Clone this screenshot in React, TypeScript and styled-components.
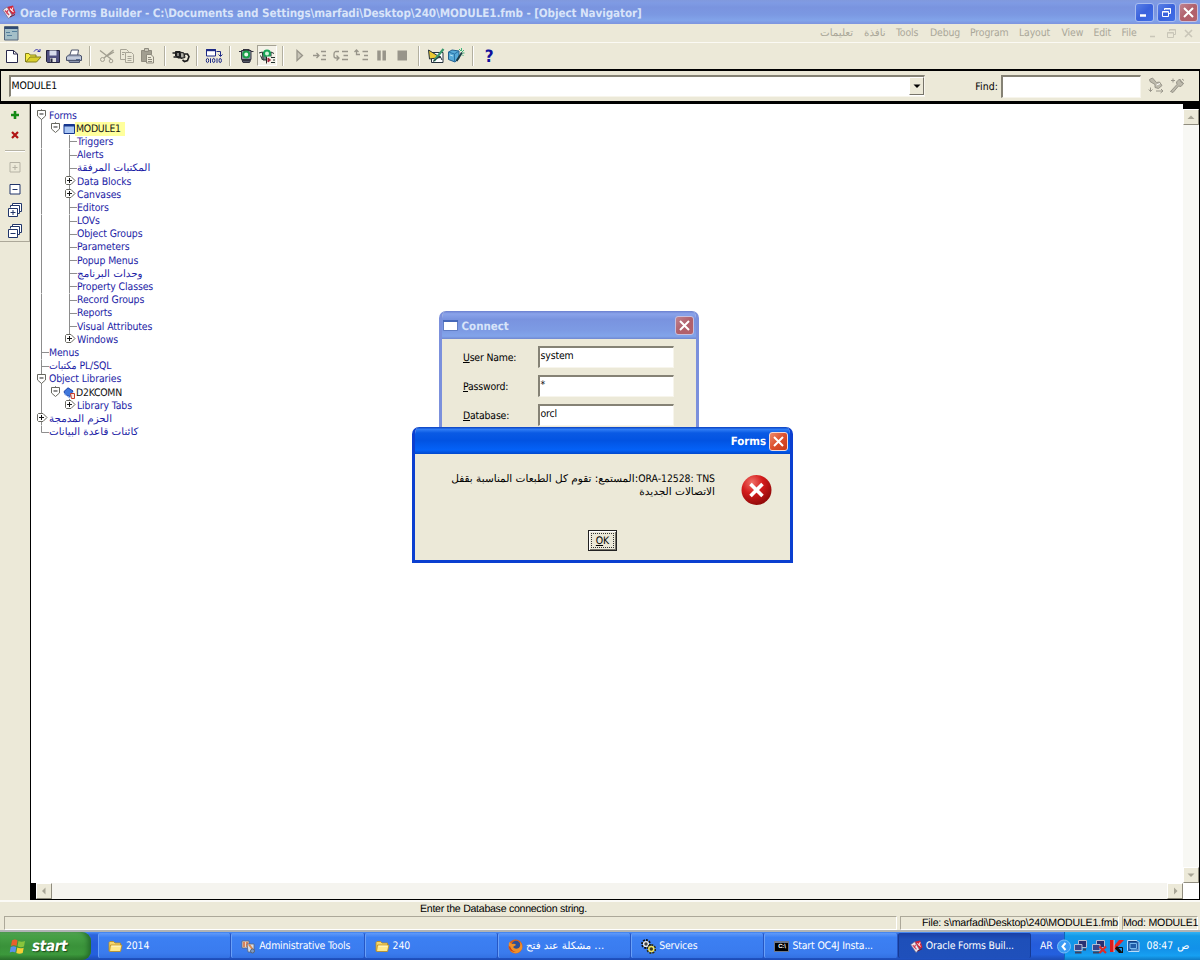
import { ReactNode } from 'react';
import styled, { createGlobalStyle, css } from 'styled-components';

const UI_FONT = `'DejaVu Sans Condensed', 'DejaVu Sans', sans-serif`;
const FACE = '#ece9d8';

const GlobalStyle = createGlobalStyle`
  * {
    box-sizing: border-box;
  }
  body {
    margin: 0;
    overflow: hidden;
    background: ${FACE};
    font-family: ${UI_FONT};
    font-stretch: condensed;
    font-size: 10.4px;
    letter-spacing: -0.12px;
    color: #000;
    text-rendering: geometricPrecision;
  }
  svg {
    display: block;
    flex: none;
  }
`;

const Screen = styled.div`
  position: relative;
  width: 1200px;
  height: 960px;
  display: flex;
  flex-direction: column;
  overflow: hidden;
`;

/* joined script must not be letter-spaced */
const arabicText = css`
  font-family: 'DejaVu Sans', sans-serif;
  font-stretch: normal;
  font-size: 10.3px;
  letter-spacing: 0;
`;

const Label = styled.span<{ $ls?: number; $w?: number; $arabic?: boolean }>`
  white-space: pre;
  letter-spacing: ${({ $ls = -0.15 }) => $ls}px;
  ${({ $w }) => $w && `width: ${$w}px; flex: none;`}
  ${({ $arabic }) => $arabic && arabicText}
`;

/* ---------- main title bar ---------- */

const TitleBar = styled.div`
  height: 24px;
  flex: none;
  display: flex;
  align-items: center;
  padding: 0 2px 0 2px;
  background: linear-gradient(#8199dd 0%, #7f9be4 12%, #7a94df 30%, #7b98e2 60%, #82a4ea 85%, #7d94de 100%);
`;

const TitleText = styled.div`
  flex: 1;
  margin-left: 4px;
  padding-top: 2px;
  font-size: 11.6px;
  font-weight: 700;
  letter-spacing: -0.095px;
  color: #d8e4f9;
  white-space: pre;
`;

const CaptionButton = styled.div<{ $tone: 'blue' | 'dim' | 'red' }>`
  width: 19px;
  height: 19px;
  margin-left: 3px;
  display: flex;
  align-items: center;
  justify-content: center;
  flex: none;
  border: 1px solid #dfe6f8;
  border-radius: 3px;
  ${({ $tone }) =>
    $tone === 'blue' &&
    css`
      border-color: #a9bdf0;
      background: linear-gradient(135deg, #5a80e6, #3a62dc 50%, #3f6fe8);
    `}
  ${({ $tone }) =>
    $tone === 'dim' &&
    css`
      border-color: #c9bfdc;
      background: linear-gradient(135deg, #c0838f, #b0606c 50%, #b5616a);
    `}
  ${({ $tone }) =>
    $tone === 'red' &&
    css`
      border-color: #f4d8d4;
      background: linear-gradient(135deg, #ec8a6c, #dc4f2c 50%, #c63a18);
    `}
`;

/* ---------- menu bar ---------- */

const MenuBar = styled.div`
  height: 19px;
  flex: none;
  display: flex;
  align-items: center;
  padding: 0 7px 0 3px;
  border-bottom: 1px solid #fbfaf4;
  color: #aaa798;
`;

const MenuSpacer = styled.div`
  flex: 1;
`;

const MenuItem = styled.div<{ $w: number; $arabic?: boolean }>`
  width: ${({ $w }) => $w}px;
  flex: none;
  white-space: pre;
  ${({ $arabic }) => $arabic && arabicText}
`;

const ChildButtons = styled.div`
  display: flex;
  align-items: center;
  gap: 7.5px;
`;

/* ---------- toolbar ---------- */

const Toolbar = styled.div`
  height: 27px;
  flex: none;
  display: flex;
  align-items: center;
  padding: 0 0 1px 1.7px;
  border-bottom: 1px solid #000;
`;

const ToolSlot = styled.div<{ $pressed?: boolean }>`
  width: 20.7px;
  height: 21px;
  display: flex;
  align-items: center;
  justify-content: center;
  ${({ $pressed }) =>
    $pressed &&
    css`
      border: 1px solid;
      border-color: #a5a294 #fff #fff #a5a294;
      background: #f4f2e8;
    `}
`;

const ToolDivider = styled.div`
  width: 12px;
  height: 20px;
  display: flex;
  justify-content: center;
  &::before {
    content: '';
    width: 2px;
    background: linear-gradient(90deg, #b3b0a0 50%, #fff 50%);
  }
`;

/* ---------- module / find strip ---------- */

const FindStrip = styled.div`
  height: 34px;
  flex: none;
  display: flex;
  align-items: flex-start;
  padding: 4px 12px 0 8px;
  border: 1px solid #000;
  border-width: 1px 1px 3px 1px;
`;

const SunkenField = styled.div<{ $w: number; $h: number }>`
  width: ${({ $w }) => $w}px;
  height: ${({ $h }) => $h}px;
  flex: none;
  display: flex;
  background: #fff;
  border-style: solid;
  border-width: 2px 1px 1px 2px;
  border-color: #858275 #f7f5ec #f7f5ec #858275;
  white-space: pre;
`;

const ModuleText = styled.div`
  flex: 1;
  padding: 3px 0 0 0.5px;
`;

const DropButton = styled.div`
  width: 15px;
  height: 18px;
  display: flex;
  align-items: center;
  justify-content: center;
  background: ${FACE};
  border: 1px solid;
  border-color: #fff #77746a #77746a #fff;
`;

const FindLabel = styled.div`
  width: 76px;
  padding: 6px 3px 0 0;
  text-align: right;
  letter-spacing: 0.1px;
`;

const FindIcons = styled.div`
  display: flex;
  gap: 5px;
  padding: 2px 0 0 7px;
`;

/* ---------- work area ---------- */

const WorkArea = styled.div`
  height: 796px;
  flex: none;
  display: flex;
`;

const SideColumn = styled.div`
  width: 30px;
  flex: none;
`;

const SideTools = styled.div`
  height: 138px;
  display: flex;
  flex-direction: column;
  align-items: center;
  border-right: 1px solid #aca899;
  border-bottom: 1px solid #aca899;
  padding-top: 2px;
`;

const SideSlot = styled.div<{ $h: number }>`
  height: ${({ $h }) => $h}px;
  display: flex;
  align-items: center;
`;

const SideRule = styled.div`
  width: 20px;
  height: 2px;
  margin: 4px 0 4px;
  background: linear-gradient(#b7b4a5 50%, #fff 50%);
`;

const Navigator = styled.div`
  flex: 1;
  display: grid;
  grid-template: 1fr 16px / 1fr 17px;
  background: #fff;
  border-left: 1px solid #000;
  border-bottom: 1px solid #000;
`;

const Tree = styled.div`
  padding: 5px 0 0 4px;
`;

const TreeRow = styled.div`
  height: 13.2px;
  display: flex;
  align-items: center;
  color: #1c1ca6;
  line-height: 13px;
`;

const NodeName = styled.span<{ $kind?: 'selected' | 'plain'; $arabic?: boolean }>`
  white-space: pre;
  padding-top: 1px;
  letter-spacing: -0.1px;
  ${({ $arabic }) => $arabic && arabicText}
  ${({ $kind }) => $kind && 'color: #111; padding-left: 1px; letter-spacing: -0.25px;'}
  ${({ $kind }) => $kind === 'selected' && 'background: #ffff9c; padding-right: 4px;'}
`;

const VScroll = styled.div`
  display: flex;
  flex-direction: column;
  justify-content: space-between;
  border-top: 5px solid #000;
  border-right: 1px solid #000;
  background: #f8f8f4;
`;

const HScroll = styled.div`
  display: flex;
  justify-content: space-between;
  border-left: 5px solid #000;
  background: #f5f4ef;
`;

const ScrollButton = styled.div`
  width: 16px;
  height: 16px;
  display: flex;
  align-items: center;
  justify-content: center;
  background: ${FACE};
  border: 1px solid;
  border-color: #fff #8f8c7e #8f8c7e #fff;
`;

const ScrollCorner = styled.div`
  border-right: 1px solid #000;
`;

/* ---------- status bar ---------- */

const StatusBar = styled.div`
  height: 32px;
  flex: none;
  font-family: 'Liberation Sans', Arial, sans-serif;
  font-size: 10.6px;
  letter-spacing: -0.28px;
  border-top: 2px solid #fbfaf6;
  border-bottom: 2px solid #b0b3b4;
`;

const StatusHint = styled.div`
  height: 14px;
  padding-left: 420px;
  line-height: 15px;
  white-space: pre;
`;

const StatusCells = styled.div`
  height: 14px;
  display: flex;
  gap: 3px;
  padding: 0 2px 0 4px;
`;

const StatusCell = styled.div<{ $w?: number }>`
  ${({ $w }) => ($w ? `width: ${$w}px; flex: none;` : 'flex: 1;')}
  border: 1px solid;
  border-color: #aca899 #fff #fff #aca899;
  text-align: right;
  line-height: 13px;
  letter-spacing: -0.2px;
  white-space: pre;
`;

/* ---------- taskbar ---------- */

const Taskbar = styled.div`
  height: 28px;
  flex: none;
  display: flex;
  color: #fff;
  background: linear-gradient(#4a8df5 0%, #2d66dd 10%, #255cdb 45%, #2460de 80%, #1d4bb4 100%);
`;

const StartButton = styled.div`
  width: 91px;
  height: 28px;
  display: flex;
  align-items: center;
  padding-left: 9px;
  gap: 6px;
  margin-right: 7px;
  border-radius: 0 9px 9px 0;
  background: linear-gradient(#5cad5c 0%, #47a147 14%, #3a923a 50%, #3c993c 80%, #2b712b 100%);
  box-shadow: inset -4px 0 5px -1px #256b2b;
`;

const StartText = styled.span`
  font-size: 15px;
  font-weight: 700;
  font-style: italic;
  letter-spacing: -0.3px;
  text-shadow: 1px 1px 1px #1c4d1c;
`;

const TaskButton = styled.div<{ $active?: boolean }>`
  width: 133.3px;
  height: 25px;
  margin-top: 1px;
  display: flex;
  align-items: center;
  gap: 3px;
  padding: 1px 0 0 9px;
  flex: none;
  border-radius: 2px;
  border-left: 1px solid #6aa0f8;
  border-right: 1px solid #2656c4;
  background: ${({ $active }) =>
    $active ? 'linear-gradient(#193fa5, #1e4fb9 25%, #1f50bb)' : 'linear-gradient(#5f9afa, #3c80f3 18%, #3a7bee 80%, #3371e2)'};
  ${({ $active }) => $active && 'border-color: #163a94; padding-left: 11px;'}
`;

const Language = styled.div`
  width: 33px;
  padding: 8px 0 0 9px;
`;

const Tray = styled.div`
  flex: 1;
  display: flex;
  align-items: center;
  gap: 2.5px;
  border-left: 1px solid #0f68b8;
  background: linear-gradient(#32b2f4 0%, #139ae8 14%, #1291e9 60%, #16a0f2 85%, #0f7bc6 100%);
`;

const CollapseTray = styled.div`
  margin: 0 -1px 0 -8px;
`;

const Clock = styled.div`
  display: flex;
  gap: 4px;
  padding-left: 3px;
`;

/* ---------- dialogs ---------- */

const ConnectDialog = styled.div`
  position: absolute;
  left: 439px;
  top: 311px;
  width: 260px;
  height: 140px;
  border-radius: 7px 7px 0 0;
  border: solid #7b90dc;
  border-width: 0 3px;
  background: ${FACE};
  overflow: hidden;
`;

const ConnectTitle = styled.div`
  height: 28px;
  margin: 0 -3px;
  display: flex;
  align-items: center;
  padding: 1px 5px 0 4px;
  color: #d8e4f9;
  font-weight: 700;
  font-size: 11.4px;
  background: linear-gradient(#6b80cf 0%, #8aa3ea 10%, #7993df 30%, #7d9be4 70%, #82a4ea 90%, #7088d0 100%);
`;

const ConnectForm = styled.div`
  display: grid;
  grid-template-columns: 75px 136px;
  grid-auto-rows: 29px;
  padding: 7px 0 0 21px;
`;

const FieldLabel = styled.label`
  padding-top: 6px;
  white-space: pre;
  letter-spacing: -0.18px;
`;

const FieldText = styled.span`
  padding: 2px 0 0 0.5px;
`;

const FormsDialog = styled.div`
  position: absolute;
  left: 412px;
  top: 427px;
  width: 381px;
  height: 136px;
  border-radius: 7px 7px 0 0;
  border: solid #0b3fd0;
  border-width: 0 3px 3px;
  background: ${FACE};
  overflow: hidden;
`;

const FormsTitle = styled.div`
  height: 27px;
  margin: 0 -3px;
  padding: 1px 5px 0 0;
  display: flex;
  align-items: center;
  justify-content: flex-end;
  color: #fff;
  font-weight: 700;
  font-size: 11.4px;
  background: linear-gradient(#0a40c0 0%, #2f7cf4 9%, #0a5ae4 22%, #0253e2 50%, #0462f8 85%, #0148cc 100%);
`;

const FormsBody = styled.div`
  display: flex;
  justify-content: flex-end;
  height: 76px;
  padding: 18px 18px 0 0;
`;

const Message = styled.div`
  direction: rtl;
  text-align: right;
  padding: 1px 26px 0 0;
  line-height: 12.5px;
  white-space: pre;
  ${arabicText}
  font-size: 10.5px;
`;

const ErrorCode = styled.span`
  font-family: ${UI_FONT};
  font-stretch: condensed;
  font-size: 10.4px;
  letter-spacing: -0.05px;
`;

const OkButton = styled.div`
  width: 29px;
  height: 21px;
  margin-left: 173px;
  padding: 2px;
  border: 1px solid #222;
  box-shadow: inset 1px 1px #fff, inset -1px -1px #77746a;
`;

const OkFocus = styled.div`
  height: 100%;
  line-height: 14px;
  text-align: center;
  border: 1px dotted #333;
`;

/* ---------- drawings ---------- */

type IconProps = { w?: number; h?: number; children: ReactNode; line?: string };

const Icon = ({ w = 18, h = 16, children, line = '#000' }: IconProps) => (
  <svg width={w} height={h} viewBox={`0 0 ${w} ${h}`} fill="none" stroke={line}>
    {children}
  </svg>
);

const Cross = ({ size = 11, line = '#fff', weight = 2 }: { size?: number; line?: string; weight?: number }) => (
  <Icon w={size} h={size} line={line}>
    <path d={`M1 1L${size - 1} ${size - 1}M${size - 1} 1L1 ${size - 1}`} strokeWidth={weight} />
  </Icon>
);

const OracleIcon = ({ w = 14 }: { w?: number }) => (
  <svg width={w} height={w} viewBox="0 0 14 14">
    <path d="M5 2L11 .5L13.500 8L8 11Z" fill="#d0283c" />
    <path d="M.8 5L5 2L10 10L6.500 13.500Z" fill="#f1eaf0" stroke="#6d6a88" strokeWidth=".7" />
    <path d="M8 3.500L11.500 7M11 2.500L9.500 6" stroke="#fbe6ea" strokeWidth="1.100" />
    <path d="M3 5.500L7 10M6 5L4.500 8.500" stroke="#d24358" strokeWidth="1.300" />
    <path d="M8 12L13 9.500" stroke="#7c1626" />
  </svg>
);

const FolderIcon = () => (
  <Icon w={15} h={13} line="#b98a1c">
    <path d="M1 11V2.500L2 1.500H5.500L7 3H12.500V5" fill="#f5d66b" strokeWidth=".8" />
    <path d="M1.500 11.500L2.500 5H14L12.500 11.500Z" fill="#ffe98c" strokeWidth=".8" />
    <path d="M3.500 6.200H12.500" stroke="#fff8cc" />
  </Icon>
);

const tools: Record<string, ReactNode> = {
  new: (
    <Icon line="#28284c">
      <path d="M3.500 2.500H10.500L14.500 6V14.500H3.500Z" fill="#fff" />
      <path d="M10.500 2.500V6H14.500" />
    </Icon>
  ),
  open: (
    <Icon line="#827e18">
      <path d="M1.500 14V5.500H5L6 7H12V9" fill="#f4ec46" />
      <path d="M2 14L6 9H17L12.500 14Z" fill="#d9cf2c" />
      <path d="M10 3.500C11.500 1 14 1 15.500 3.500M13.500 3.500H16V1" stroke="#3230a8" />
    </Icon>
  ),
  save: (
    <Icon line="#24243e">
      <path d="M2.500 2.500H15.500V14.500H3.500L2.500 13.500Z" fill="#505080" />
      <path d="M5.500 2.500H12.500V7.500H5.500Z" fill="#d8dcec" stroke="none" />
      <path d="M6 10H12V14H6Z" fill="#e0e0e0" stroke="none" />
      <path d="M7.500 10.500V14" strokeWidth="2" />
    </Icon>
  ),
  print: (
    <Icon line="#4b536c">
      <path d="M4.500 8L6.500 2H13.500L12.500 8" fill="#fff" />
      <path d="M1.500 9L3.500 7H14.500L16.500 8V12.500H1.500Z" fill="#a9b3c8" />
      <path d="M3.500 12.500H14.500V14.500H4.500Z" fill="#8b95ae" />
      <path d="M2 10H16" stroke="#dfe5f0" />
      <path d="M11 11.500H15" stroke="#49638e" />
    </Icon>
  ),
  cut: (
    <Icon line="#a19e90">
      <path d="M2 2.500L13 11M15.500 2L6 10M16 4L9 8" strokeWidth="1.300" />
      <circle cx="4.500" cy="11.500" r="2" />
      <circle cx="13" cy="13" r="1.800" />
    </Icon>
  ),
  copy: (
    <Icon line="#a7a496">
      <path d="M2.500 1.500H8.500L10.500 3.500V11.500H2.500Z" />
      <path d="M7.500 4.500H13.500L15.500 6.500V14.500H7.500Z" fill={FACE} />
      <path d="M4 4.500H7M4 6.500H6M9.500 8.500H13.500M9.500 10.500H13.500M9.500 12.500H13.500" />
    </Icon>
  ),
  paste: (
    <Icon line="#8e8b7e">
      <path d="M2.500 2.500H12.500V13.500H2.500Z" fill="#a19e90" />
      <path d="M5.500 .5H9.500V3.500H5.500Z" fill="#c9c6b8" />
      <path d="M7.500 6.500H12L14.500 9V15H7.500Z" fill={FACE} />
      <path d="M9 9.500H12M9 11.500H13M9 13.500H13" />
    </Icon>
  ),
  plug: (
    <Icon line="#1c1c1c">
      <path d="M.5 5H4M1.500 9H5" strokeWidth="1.500" />
      <path d="M3.500 3.500H8L9 10H6L3.500 8Z" fill="#222" />
      <path d="M8 4L12 5L13 9.500L9 10.500Z" fill="#77766e" />
      <path d="M12.500 6H15.500L17 8.500L15.500 12.500L12.500 13.500L10.500 12" strokeWidth="1.600" />
      <path d="M6 5V8M10 5.500V9" stroke="#e4e3da" />
    </Icon>
  ),
  compile: (
    <Icon line="#1d2a86">
      <path d="M1.500 1.500H10.500V8H1.500Z" fill="#fff" />
      <path d="M1 2.200H11" strokeWidth="2" />
      <path d="M11.500 3.500H15.500V8M13.500 6.500L15.500 8.500L17.500 6.500" />
      <ellipse cx="2.500" cy="12.500" rx="1.200" ry="2.100" />
      <path d="M5.500 10.300V15M12 10.300V15" />
      <ellipse cx="8.700" cy="12.500" rx="1.200" ry="2.100" />
      <ellipse cx="15.200" cy="12.500" rx="1.200" ry="2.100" />
    </Icon>
  ),
  run: (
    <Icon line="#33333f">
      <path d="M4.500 2.500H14V11.500H4.500Z" fill="#8d91a4" />
      <path d="M5 12.500H13.500L12.500 14.500H6Z" fill="#555a68" />
      <circle cx="9.200" cy="6.500" r="3" fill="#e6faea" stroke="#18a04a" strokeWidth="2" />
      <path d="M2 3.500H4.500M14 3.500H16.500M6 1.500H12.500" />
    </Icon>
  ),
  runDebug: (
    <Icon line="#20302c">
      <path d="M4.500 4.500H13V12H5Z" fill="#77818a" />
      <circle cx="9" cy="5.500" r="3" fill="#d0f3d8" stroke="#17a455" strokeWidth="2" />
      <path d="M1 5L4.500 4M13 4L16 5.500M2.500 7.500L4.500 12" />
      <path d="M8 8.500H17V16H8Z" fill="#f4f2e8" stroke="none" />
      <path d="M8.500 8.500V15.500" stroke="#222" />
      <path d="M10 10L12.500 12L10 14Z" fill="#a5243c" stroke="#a5243c" />
      <path d="M13 9.500H17M15 12H17M13 14.500H17" />
    </Icon>
  ),
  play: (
    <Icon line="#98958a">
      <path d="M6 2.500L11.500 7.500L6 12.500Z" fill="#c8c5b8" strokeWidth="1.300" />
    </Icon>
  ),
  stepInto: (
    <Icon line="#98958a">
      <path d="M2 7.500H8M5.500 5L8 7.500L5.500 10" strokeWidth="1.300" />
      <path d="M10 3.500H15M11.500 7.500H15M10 11.500H15" strokeWidth="1.500" />
    </Icon>
  ),
  stepOver: (
    <Icon line="#98958a">
      <path d="M7 3.500H3.500Q2 4 2 6V8Q2 10 4 10H7M4.500 7.500L7 10L4.500 12.500" strokeWidth="1.300" />
      <path d="M10 3.500H16M11.500 7.500H16M10 11.500H16" strokeWidth="1.500" />
    </Icon>
  ),
  stepOut: (
    <Icon line="#98958a">
      <path d="M7 6.500H3.500V2M1.500 4L3.500 2L5.500 4" strokeWidth="1.300" />
      <path d="M9.500 3.500H15M11 7.500H15M9.500 11.500H15" strokeWidth="1.500" />
    </Icon>
  ),
  pause: (
    <Icon line="#98958a">
      <path d="M6 2.500V12.500M11.200 2.500V12.500" strokeWidth="3.500" />
    </Icon>
  ),
  stop: (
    <Icon>
      <path d="M3.500 2.500H13V12.500H3.500Z" fill="#98958a" stroke="none" />
    </Icon>
  ),
  layout: (
    <Icon line="#22303a">
      <path d="M4.500 4.500H16V14.500H4.500Z" fill="#fff" />
      <path d="M1.500 2L13.500 9.500L2.500 11Z" fill="#e9c832" />
      <path d="M16.500 1L10 9L7 13" stroke="#39976d" strokeWidth="2.200" />
      <path d="M6 13.500L13 8L15 12" />
    </Icon>
  ),
  source: (
    <Icon line="#24618f">
      <path d="M1.500 4L5 2L12 3V10.500L8 14L1.500 11.500Z" fill="#56a9d8" />
      <path d="M1.500 4L7.500 6V14M7.500 6L12 3" stroke="#2c74a6" />
      <path d="M3 7L6 8" stroke="#b5e2f4" />
      <path d="M15 4.500L9.500 13" stroke="#1d3b46" strokeWidth="2" />
      <path d="M12 1L14 3M14.500 0V3M17 2L15 4M17.500 5H15.500M16.500 8L15 6.500" stroke="#40b47a" />
    </Icon>
  ),
};

const HelpMark = styled.span`
  font-family: 'DejaVu Sans', sans-serif;
  font-size: 17px;
  line-height: 18px;
  padding-top: 2px;
  font-weight: 700;
  color: #10109c;
`;

const FlashIcon = ({ flip }: { flip?: boolean }) => (
  <Icon w={16} h={17} line="#98958a">
    {flip ? (
      <>
        <path d="M1.500 14.500L8 7.500L7.500 5L10.500 2L14.500 6.500L12 9.500L9.500 9L4 15.500Z" fill="#bdbaac" />
        <path d="M10.500 2L12 5L14.500 6.500" />
        <path d="M2 3.500H6M4 1.500V5.500M13 2L15 3.500" />
      </>
    ) : (
      <>
        <path d="M1.500 2.500L4.500 1L8.500 5.500L11.500 5L14 8.500L10.500 11.500L7 10.500L7 7.500L2 4.500Z" fill="#bdbaac" />
        <path d="M8.500 8L12 6.500" stroke="#fff" />
        <path d="M2.500 10.500V14.500M.8 12.500L2.500 14.500L4.500 12.500M8 14H15M13 12L15 14L12.500 16" />
      </>
    )}
  </Icon>
);

type Guide = 'gap' | 'line' | 'tee' | 'corner' | 'open' | 'openSub' | 'shut' | 'shutLast' | 'shutSub';

const GuideCell = ({ kind }: { kind: Guide }) => (
  <svg width={14} height={13.2} viewBox="0 0 14 13.2" fill="none" stroke="#8d8d8d" overflow="visible">
    {(kind === 'line' || kind === 'tee' || kind === 'open' || kind === 'shut') && <path d="M6.500 0V13.500" />}
    {kind === 'corner' && <path d="M6.500 0V6.500H14" />}
    {kind === 'tee' && <path d="M6.500 6.500H14" />}
    {(kind === 'openSub' || kind === 'shutLast' || kind === 'shutSub') && <path d="M6.500 0V3" />}
    {(kind === 'open' || kind === 'openSub') && (
      <>
        <path d="M2.500 1.500H10.500V7L6.500 10.500L2.500 7Z" fill="#fff" stroke="#66665e" strokeLinejoin="round" />
        <path d="M4.500 5H8.500" stroke="#222" />
      </>
    )}
    {(kind === 'shut' || kind === 'shutLast' || kind === 'shutSub') && (
      <>
        <path d="M3.500 1.500H8L12 5.500L8 9.500H3.500L2.500 8.500V2.500Z" fill="#fff" stroke="#66665e" strokeLinejoin="round" />
        <path d="M4 5.500H9M6.500 3V8" stroke="#111" />
      </>
    )}
  </svg>
);

const ModuleIcon = () => (
  <Icon w={12} h={12} line="#16378e">
    <path d="M1 1.500H11.500V10.500H1Z" fill="#a9c6f4" />
    <path d="M1 2.500H11.500" strokeWidth="2" />
  </Icon>
);

const LibraryIcon = () => (
  <Icon w={12} h={12} line="#1a3fa8">
    <path d="M1 4.500L5 .8L10 4L7 9.500L2 7.500Z" fill="#3f78dc" />
    <path d="M1 6L6.500 11L10 5" stroke="#7ba6ee" />
    <path d="M7.500 6.500H11.500V11.500H8.500Z" fill="#fbe9e2" stroke="#cc3b28" />
  </Icon>
);

type TreeNode = {
  name: string;
  guides: Guide[];
  icon?: ReactNode;
  kind?: 'selected' | 'plain';
  arabic?: boolean;
};

const sub: Guide[] = ['line', 'gap', 'tee'];
const subShut: Guide[] = ['line', 'gap', 'shut'];

const treeNodes: TreeNode[] = [
  { name: 'Forms', guides: ['open'] },
  { name: 'MODULE1', guides: ['line', 'openSub'], icon: <ModuleIcon />, kind: 'selected' },
  { name: 'Triggers', guides: sub },
  { name: 'Alerts', guides: sub },
  { name: 'المكتبات المرفقة', guides: sub, arabic: true },
  { name: 'Data Blocks', guides: subShut },
  { name: 'Canvases', guides: subShut },
  { name: 'Editors', guides: sub },
  { name: 'LOVs', guides: sub },
  { name: 'Object Groups', guides: sub },
  { name: 'Parameters', guides: sub },
  { name: 'Popup Menus', guides: sub },
  { name: 'وحدات البرنامج', guides: sub, arabic: true },
  { name: 'Property Classes', guides: sub },
  { name: 'Record Groups', guides: sub },
  { name: 'Reports', guides: sub },
  { name: 'Visual Attributes', guides: sub },
  { name: 'Windows', guides: ['line', 'gap', 'shutLast'] },
  { name: 'Menus', guides: ['tee'] },
  { name: 'مكتبات PL/SQL', guides: ['tee'] },
  { name: 'Object Libraries', guides: ['open'] },
  { name: 'D2KCOMN', guides: ['line', 'openSub'], icon: <LibraryIcon />, kind: 'plain' },
  { name: 'Library Tabs', guides: ['line', 'gap', 'shutSub'] },
  { name: 'الحزم المدمجة', guides: ['shut'], arabic: true },
  { name: 'كائنات قاعدة البيانات', guides: ['corner'], arabic: true },
];

const menus: { name: string; width: number; arabic?: boolean }[] = [
  { name: 'تعليمات', width: 44, arabic: true },
  { name: 'نافذة', width: 32, arabic: true },
  { name: 'Tools', width: 34 },
  { name: 'Debug', width: 40 },
  { name: 'Program', width: 49 },
  { name: 'Layout', width: 42.5 },
  { name: 'View', width: 32 },
  { name: 'Edit', width: 28 },
  { name: 'File', width: 26.5 },
];

const toolGroups: string[][] = [
  ['new', 'open', 'save', 'print'],
  ['cut', 'copy', 'paste'],
  ['plug'],
  ['compile'],
  ['run', 'runDebug'],
  ['play', 'stepInto', 'stepOver', 'stepOut', 'pause', 'stop'],
  ['layout', 'source'],
];

const PlusBox = ({ dim, minus, stacked }: { dim?: boolean; minus?: boolean; stacked?: boolean }) => (
  <Icon w={16} h={16} line={dim ? '#b5b2a4' : '#20356a'}>
    {stacked && <path d="M5.500 3.500V1.500H14.500V9.500H12.500M3.500 5.500V3.500H12.500V11.500H10.500" fill="#fff" />}
    {stacked ? <path d="M1.500 6.500H10.500V14.500H1.500Z" fill="#fff" /> : <path d="M3 3.500H13V13H3Z" fill={dim ? FACE : '#fff'} />}
    <path d={stacked ? 'M3.500 10.500H8.500' : 'M5.500 8.500H10.500'} />
    {!minus && <path d={stacked ? 'M6 8V13' : 'M8 6V11'} />}
  </Icon>
);

const Arrow = ({ dir, fill = '#a8a596' }: { dir: 'up' | 'down' | 'left' | 'right'; fill?: string }) => {
  const points = {
    up: '0.5,6 4,2.5 7.5,6',
    down: '0.5,2.5 7.5,2.5 4,6',
    left: '5.5,0.5 2,4 5.5,7.5',
    right: '3,0.5 6.5,4 3,7.5',
  };
  return (
    <svg width={8} height={8} viewBox="0 0 8 8">
      <polygon points={points[dir]} fill={fill} />
    </svg>
  );
};

const RestoreGlyph = ({ line = '#fff' }: { line?: string }) => (
  <Icon w={11} h={11} line={line}>
    <path d="M3.500 3V1.500H9.500V6.500H8M3.500 2H9.500M1.500 4.500H7.500V9.500H1.500ZM1.500 5H7.500" />
  </Icon>
);

const WindowsFlag = () => (
  <svg width="17" height="17" viewBox="0 0 17 17">
    <path d="M3 2.500Q6 .5 8.500 2.500L7.500 8Q5 6.500 2 8Z" fill="#ea5f2c" />
    <path d="M9.500 3Q12.500 4.500 16 3L15 8.500Q11.500 10 8.500 8.300Z" fill="#88c53c" />
    <path d="M1.700 9Q4.500 7.500 7.300 9L6.300 14.500Q3.500 13 .7 14.500Z" fill="#5a90ec" />
    <path d="M8.300 9.500Q11 11 14.700 9.700L13.700 15Q10.500 16.500 7.300 15Z" fill="#f7cf35" />
  </svg>
);

const AdminIcon = () => (
  <Icon w={15} h={15} line="#5a6478">
    <path d="M1 2H8V9H1Z" fill="#e8d8c4" strokeWidth=".8" />
    <path d="M3 3V8M6 3V8" stroke="#d2683c" strokeWidth="1.500" />
    <path d="M6 5H13V13H7Z" fill="#d3dceb" strokeWidth=".8" />
    <path d="M8 5.500L12 11" stroke="#d98a4c" strokeWidth="2" />
    <circle cx="11.500" cy="12" r="2" fill="#7f9cc4" />
  </Icon>
);

const FirefoxIcon = () => (
  <svg width="15" height="15" viewBox="0 0 15 15">
    <circle cx="7.500" cy="7.500" r="7" fill="#d9601a" />
    <circle cx="8" cy="6" r="4.200" fill="#2f4f94" />
    <path d="M1 3L4 5Q7 4 8 6L5 8Q7 11 11 9Q13 7 12 3Q15 6 14 10Q11 15 6 14Q0 12 1 3Z" fill="#f0902a" />
    <path d="M2 7Q3 12 8 13Q2 13 1 8Z" fill="#c33c14" />
  </svg>
);

const GearsIcon = () => (
  <Icon w={15} h={15}>
    <circle cx="5" cy="5" r="3.400" stroke="#111" strokeWidth="3" strokeDasharray="1.700 .9" />
    <circle cx="5" cy="5" r="2.400" fill="#444" stroke="#ececec" strokeWidth="1.400" />
    <circle cx="10.300" cy="10" r="3.400" stroke="#2c2c10" strokeWidth="3" strokeDasharray="1.700 .9" />
    <circle cx="10.300" cy="10" r="2.500" fill="#3c3c20" stroke="#f0e468" strokeWidth="1.500" />
  </Icon>
);

const ConsoleBox = styled.div`
  width: 15px;
  height: 11px;
  background: #000;
  border: 1px solid #6d7688;
  border-top-width: 2px;
  color: #fff;
  font: 700 6px/8px 'Liberation Sans', sans-serif;
  text-align: center;
`;

const NetIcon = ({ off }: { off?: boolean }) => (
  <Icon w={16} h={15} line="#b4bcd2">
    <path d="M5.500 1.500H13.500V8.500H5.500Z" fill="#2a2f72" />
    <path d="M1.500 5.500H9V11.500H1.500Z" fill="#39458c" />
    <path d="M2 13.500H8.500M10 10.500H13" stroke="#3a4360" strokeWidth="2" />
    {off && <path d="M8.500 7.500L15 14M15 7.500L8.500 14" stroke="#e02c28" strokeWidth="2.200" />}
  </Icon>
);

const KasperskyIcon = () => (
  <svg width="14" height="15" viewBox="0 0 14 15">
    <path d="M0 1H4V13H0Z" fill="#dc1c1c" />
    <path d="M4 7L9 1H14L7.500 8L4 12Z" fill="#e82424" />
    <path d="M7 7L13 14H9L5 9.500Z" fill="#111" />
    <path d="M8 8.500H12.500V14" stroke="#111" fill="none" />
    <path d="M4 1V13" stroke="#fff" strokeWidth=".7" />
  </svg>
);

const MonitorIcon = () => (
  <Icon w={15} h={14} line="#bcdcf8">
    <path d="M1.500 1.500H11L13 3.500V12.500H2.500L1.500 11.500Z" fill="#205ca8" />
    <path d="M4 4.500H10.500V9.500H4ZM5 11H12" stroke="#79b9ec" />
    <path d="M3 2.500H10" stroke="#163e7c" />
  </Icon>
);

const App = () => {
  return (
    <>
      <GlobalStyle />
      <Screen>
        <TitleBar>
          <OracleIcon />
          <TitleText>
            {'Oracle Forms Builder - C:\\Documents and Settings\\marfadi\\Desktop\\240\\MODULE1.fmb - [Object Navigator]'}
          </TitleText>
          <CaptionButton $tone="blue">
            <Icon w={11} h={11} line="#fff">
              <path d="M1 8.500H7" strokeWidth="2.500" />
            </Icon>
          </CaptionButton>
          <CaptionButton $tone="blue">
            <RestoreGlyph />
          </CaptionButton>
          <CaptionButton $tone="dim">
            <Cross />
          </CaptionButton>
        </TitleBar>

        <MenuBar>
          <Icon w={16} h={16} line="#56677c">
            <path d="M1.500 1.500H15V15H1.500Z" fill="#a4bfc8" />
            <path d="M1.500 3H15" stroke="#2f4a72" strokeWidth="2" />
            <path d="M3 7.500H7M9 6.500H14M4 10.500H9" stroke="#547f9c" />
          </Icon>
          <MenuSpacer />
          {menus.map((menu) => (
            <MenuItem key={menu.name} $w={menu.width} $arabic={menu.arabic}>
              {menu.name}
            </MenuItem>
          ))}
          <ChildButtons>
            <Icon w={10} h={10} line="#c9c6b8">
              <path d="M2 8.500H7" strokeWidth="1.500" />
            </Icon>
            <RestoreGlyph line="#c9c6b8" />
            <Cross size={9} line="#c9c6b8" weight={1.6} />
          </ChildButtons>
        </MenuBar>

        <Toolbar>
          {toolGroups.map((group) => [
            ...group.map((name) => (
              <ToolSlot key={name} $pressed={name === 'runDebug'}>
                {tools[name]}
              </ToolSlot>
            )),
            <ToolDivider key={`${group[0]}-end`} />,
          ])}
          <ToolSlot>
            <HelpMark>?</HelpMark>
          </ToolSlot>
        </Toolbar>

        <FindStrip>
          <SunkenField $w={916} $h={22}>
            <ModuleText>MODULE1</ModuleText>
            <DropButton>
              <Arrow dir="down" fill="#000" />
            </DropButton>
          </SunkenField>
          <FindLabel>Find:</FindLabel>
          <SunkenField $w={140} $h={23} />
          <FindIcons>
            <FlashIcon />
            <FlashIcon flip />
          </FindIcons>
        </FindStrip>

        <WorkArea>
          <SideColumn>
            <SideTools>
              <SideSlot $h={18}>
                <Icon w={10} h={10} line="#168a16">
                  <path d="M5 1V9M1 5H9" strokeWidth="2.600" />
                </Icon>
              </SideSlot>
              <SideSlot $h={22}>
                <Cross size={8} line="#b01414" weight={2.2} />
              </SideSlot>
              <SideRule />
              <SideSlot $h={22}>
                <PlusBox dim />
              </SideSlot>
              <SideSlot $h={21}>
                <PlusBox minus />
              </SideSlot>
              <SideSlot $h={21}>
                <PlusBox stacked />
              </SideSlot>
              <SideSlot $h={21}>
                <PlusBox stacked minus />
              </SideSlot>
            </SideTools>
          </SideColumn>
          <Navigator>
            <Tree>
              {treeNodes.map((node) => (
                <TreeRow key={node.name}>
                  {node.guides.map((kind, index) => (
                    <GuideCell key={index} kind={kind} />
                  ))}
                  {node.icon}
                  <NodeName $kind={node.kind} $arabic={node.arabic}>
                    {node.name}
                  </NodeName>
                </TreeRow>
              ))}
            </Tree>
            <VScroll>
              <ScrollButton>
                <Arrow dir="up" />
              </ScrollButton>
              <ScrollButton>
                <Arrow dir="down" />
              </ScrollButton>
            </VScroll>
            <HScroll>
              <ScrollButton>
                <Arrow dir="left" />
              </ScrollButton>
              <ScrollButton>
                <Arrow dir="right" />
              </ScrollButton>
            </HScroll>
            <ScrollCorner />
          </Navigator>
        </WorkArea>

        <StatusBar>
          <StatusHint>Enter the Database connection string.</StatusHint>
          <StatusCells>
            <StatusCell />
            <StatusCell $w={219}>{'File: s\\marfadi\\Desktop\\240\\MODULE1.fmb'}</StatusCell>
            <StatusCell $w={76}>Mod: MODULE1</StatusCell>
          </StatusCells>
        </StatusBar>

        <Taskbar>
          <StartButton>
            <WindowsFlag />
            <StartText>start</StartText>
          </StartButton>
          <TaskButton>
            <FolderIcon />
            <Label>2014</Label>
          </TaskButton>
          <TaskButton>
            <AdminIcon />
            <Label>Administrative Tools</Label>
          </TaskButton>
          <TaskButton>
            <FolderIcon />
            <Label>240</Label>
          </TaskButton>
          <TaskButton>
            <FirefoxIcon />
            <Label $arabic>{'مشكلة عند فتح ...'}</Label>
          </TaskButton>
          <TaskButton>
            <GearsIcon />
            <Label>Services</Label>
          </TaskButton>
          <TaskButton>
            <ConsoleBox>C:\</ConsoleBox>
            <Label>Start OC4J Insta...</Label>
          </TaskButton>
          <TaskButton $active>
            <OracleIcon w={13} />
            <Label>Oracle Forms Buil...</Label>
          </TaskButton>
          <Language>AR</Language>
          <Tray>
            <CollapseTray>
              <svg width="14" height="15" viewBox="0 0 14 15" fill="none">
                <circle cx="7" cy="7.500" r="6.500" fill="#3a9af4" stroke="#78c0fa" />
                <path d="M8.500 4L5.500 7.500L8.500 11" stroke="#fff" strokeWidth="2" />
              </svg>
            </CollapseTray>
            <NetIcon />
            <NetIcon off />
            <KasperskyIcon />
            <MonitorIcon />
            <Clock>
              <Label $ls={-0.1}>08:47</Label>
              <Label $arabic>ص</Label>
            </Clock>
          </Tray>
        </Taskbar>

        <ConnectDialog>
          <ConnectTitle>
            <Icon w={15} h={12} line="#4668b8">
              <path d="M.5 1.500H14.500V10.500H.5Z" fill="#fff" strokeWidth=".8" />
              <path d="M0 1H15" strokeWidth="2" />
            </Icon>
            <Label $w={214} $ls={0}>
              {' Connect'}
            </Label>
            <CaptionButton $tone="dim">
              <Cross />
            </CaptionButton>
          </ConnectTitle>
          <ConnectForm>
            <FieldLabel>
              <u>U</u>ser Name:
            </FieldLabel>
            <SunkenField $w={136} $h={22}>
              <FieldText>system</FieldText>
            </SunkenField>
            <FieldLabel>
              <u>P</u>assword:
            </FieldLabel>
            <SunkenField $w={136} $h={22}>
              <FieldText>*</FieldText>
            </SunkenField>
            <FieldLabel>
              <u>D</u>atabase:
            </FieldLabel>
            <SunkenField $w={136} $h={22}>
              <FieldText>orcl</FieldText>
            </SunkenField>
          </ConnectForm>
        </ConnectDialog>

        <FormsDialog>
          <FormsTitle>
            <Label $ls={-0.05}>Forms</Label>
            <CaptionButton $tone="red">
              <Cross />
            </CaptionButton>
          </FormsTitle>
          <FormsBody>
            <Message>
              <div>
                <ErrorCode dir="ltr">ORA-12528: TNS</ErrorCode>
                {':المستمع: تقوم كل الطبعات المناسبة بقفل'}
              </div>
              <div>الاتصالات الجديدة</div>
            </Message>
            <svg width="31" height="36" viewBox="0 0 31 36">
              <defs>
                <radialGradient id="stop" cx=".35" cy=".25" r=".8">
                  <stop offset="0" stopColor="#f07068" />
                  <stop offset=".45" stopColor="#d41c1c" />
                  <stop offset="1" stopColor="#8c0808" />
                </radialGradient>
              </defs>
              <circle cx="15.500" cy="18" r="15" fill="url(#stop)" />
              <path d="M9.500 12L21.500 24M21.500 12L9.500 24" stroke="#fff" strokeWidth="3.600" />
            </svg>
          </FormsBody>
          <OkButton>
            <OkFocus>
              <u>O</u>K
            </OkFocus>
          </OkButton>
        </FormsDialog>
      </Screen>
    </>
  );
};

export default App;
